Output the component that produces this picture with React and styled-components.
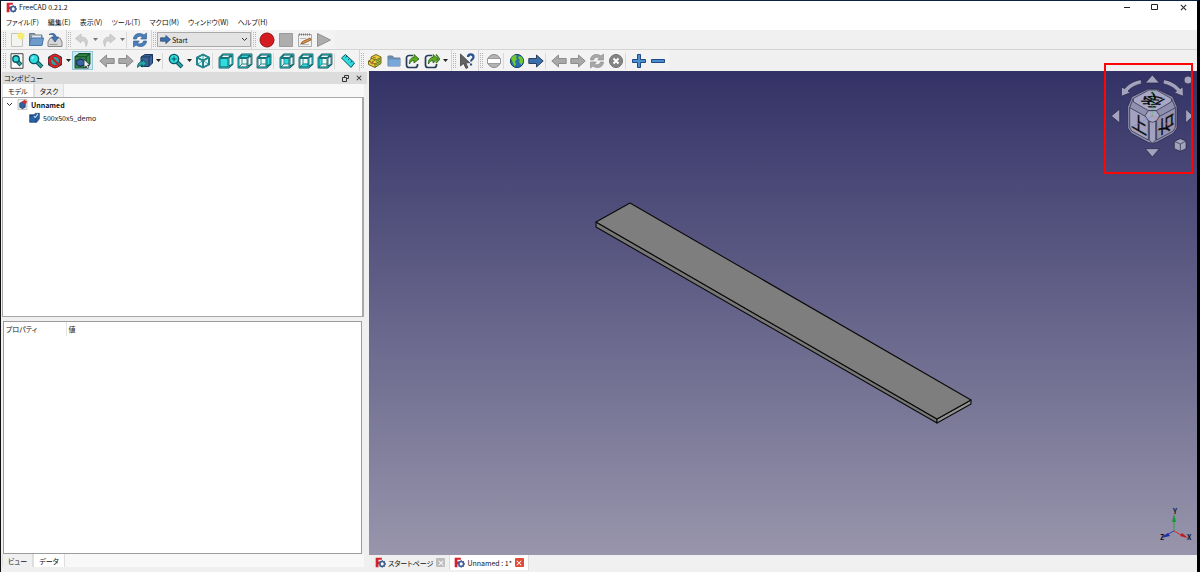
import React, { useState } from 'react'
import styled, { createGlobalStyle, css } from 'styled-components'

const FONT = '"Noto Sans CJK JP", "Noto Sans", sans-serif'
const LINE = '#d4d4d4'
const DARK = '#0a555c'
const TEAL = '#27a5a9'
const CYAN = '#2fdde0'
const NAVY = '#1d3557'

const GlobalStyle = createGlobalStyle`
  * { box-sizing: border-box; }
  body {
    margin: 0;
    background: #f0f0f0;
    font: 7px/12px ${FONT};
    font-feature-settings: "palt";
    color: #111;
  }
  button, select, th {
    font: inherit;
    font-feature-settings: inherit;
    color: inherit;
  }
  button {
    padding: 0;
    border: 0;
    background: none;
  }
  svg { display: block; flex: none; }
`

const Window = styled.div`
  min-height: 100vh;
  display: flex;
  flex-direction: column;
  border-top: 1px solid #0a2342;
  border-left: 1px solid #111;
  border-right: 3px solid #000;
`

const TitleBar = styled.header`
  display: flex;
  align-items: center;
  height: 12px;
  padding-left: 5px;
  background: #fff;
`

const Title = styled.h1`
  flex: 1;
  margin: 0 0 0 2px;
  font-size: 7px;
  font-weight: 400;
`

const WindowButton = styled.button`
  width: 28px;
  display: flex;
  justify-content: center;
`

const MenuBar = styled.nav`
  display: flex;
  align-items: center;
  gap: 9px;
  height: 17px;
  padding-left: 5px;
  background: #fff;
`

const MenuItem = styled.button`
  white-space: nowrap;
`

const ToolRow = styled.div`
  display: flex;
  height: ${props => props.$last ? 21 : 20}px;
  padding-left: 1px;
  background: #f0f0f0;
  border-bottom: ${props => props.$last ? 0 : 1}px solid ${LINE};
`

const ToolGroup = styled.div`
  display: flex;
  align-items: center;
  padding-right: ${props => props.$flush ? 0 : 2}px;
  border-right: 1px solid ${LINE};
  background: #f3f3f3;
  &:last-child {
    border-right: 0;
  }
`

const Grip = styled.span`
  width: 3px;
  height: 15px;
  margin: 0 1px;
  border: dotted #b4b4b4;
  border-width: 0 1px;
`

const Tool = styled.button`
  display: flex;
  align-items: center;
  justify-content: center;
  width: 19px;
  height: 19px;
  ${props => props.$active && css`
    width: 21px;
    border: 1px solid #90c8d8;
    background: #cfe8ef;
  `}
`

const CaretButton = styled.button`
  width: 8px;
  display: flex;
  justify-content: center;
`

const Separator = styled.span`
  width: 4px;
  height: 16px;
  border-left: 1px solid ${props => props.$blank ? 'transparent' : '#dadada'};
`

const Workbench = styled.label`
  display: flex;
  align-items: center;
  width: 94px;
  height: 15px;
  padding: 0 2px;
  border: 1px solid #a9a9a9;
  background: #e3e3e3;
  select {
    flex: 1;
    min-width: 0;
    padding: 0 1px;
    border: 0;
    appearance: none;
    background: none;
  }
`

const Body = styled.main`
  flex: 1;
  display: flex;
`

const SidePanel = styled.aside`
  flex: 0 0 368px;
  display: flex;
  flex-direction: column;
  padding: 1px 5px 5px 1px;
`

const PanelTitle = styled.div`
  display: flex;
  align-items: center;
  height: 12px;
  margin-right: -3px;
  padding: 0 2px;
  background: #dcdcdc;
  h2 {
    flex: 1;
    margin: 0;
    font-size: 7px;
    font-weight: 400;
  }
`

const PanelButton = styled.button`
  width: 13px;
  display: flex;
  justify-content: center;
`

const PanelTabs = styled.div`
  display: flex;
  height: 13px;
  background: #f8f8f8;
`

const PanelTab = styled.button`
  padding: 0 5px;
  border: 1px solid #dedede;
  border-width: 0 1px;
  background: ${props => props.$active ? '#fff' : '#f0f0f0'};
`

const TreeBox = styled.section`
  flex: 219 1 0;
  margin-bottom: 4px;
  border: 2px solid #a8a8a8;
  border-width: 1px 2px 1px 1px;
  background: #fff;
`

const Tree = styled.ul`
  margin: 0;
  padding: 0;
  list-style: none;
`

const TreeRow = styled.li`
  display: flex;
  align-items: center;
  gap: 3px;
  height: 13px;
  padding-left: ${props => props.$child ? 26 : 3}px;
  font-weight: ${props => props.$bold ? 700 : 400};
`

const Toggle = styled.button`
  padding-right: 1px;
`

const PropertyBox = styled.section`
  flex: 233 1 0;
  margin: 0 2px 0 1px;
  border: 1px solid #9c9c9c;
  background: #fff;
`

const PropertyTable = styled.table`
  width: 100%;
  border-collapse: collapse;
  table-layout: fixed;
  th {
    height: 14px;
    padding: 0 2px;
    text-align: left;
    font-weight: 400;
  }
  th:first-child {
    width: 62px;
    border-right: 1px solid #e4e4e4;
  }
`

const ViewArea = styled.section`
  flex: 1;
  min-width: 0;
  display: flex;
  flex-direction: column;
`

const Canvas = styled.div`
  position: relative;
  flex: 1;
  background: linear-gradient(#333267, #9895ac);
`

const Scene = styled.svg`
  position: absolute;
  width: 100%;
  height: 100%;
`

const NavigationCube = styled.svg`
  position: absolute;
  top: 0;
  right: 0;
`

const Highlight = styled.div`
  position: absolute;
  top: -8px;
  right: 4px;
  width: 89px;
  height: 111px;
  border: 2px solid #fc0505;
`

const AxisCross = styled.svg`
  position: absolute;
  right: 0;
  bottom: 8px;
`

const DocTabs = styled.div`
  display: flex;
  height: 17px;
  padding: 0 0 2px 2px;
`

const DocTab = styled.div`
  display: flex;
  align-items: center;
  gap: 2px;
  padding: 0 4px;
  border-right: 1px solid #dcdcdc;
  background: ${props => props.$active ? '#fff' : '#efefef'};
`

const CloseTab = styled.button`
  display: flex;
  align-items: center;
  justify-content: center;
  width: 9px;
  height: 9px;
  margin-left: 1px;
  border-radius: 1px;
  background: ${props => props.$active ? '#df4a32' : '#bdbdbd'};
`

/* icons */

const Icon = ({ size = 16, children }) => (
  <svg width={size} height={size} viewBox="0 0 16 16" fill="none" aria-hidden="true">{children}</svg>
)

const Logo = () => (
  <Icon size={11}>
    <path d="M1 1h9v3H5v3h4v3H5v5H1z" fill="#d6202c" />
    <circle cx="10.5" cy="10" r="3.4" stroke="#415f96" strokeWidth="2.4" fill="#fff" />
    <path d="M10.5 4.5v2M10.5 13.5v2M5 10h2M14 10h2M6.8 6.2l1.2 1.2M14.2 6.2L13 7.4M6.8 13.8L8 12.6M14.2 13.8L13 12.6" stroke="#415f96" strokeWidth="1.6" />
  </Icon>
)

const Caret = ({ muted }) => (
  <svg width="5" height="3" viewBox="0 0 5 3"><path d="M0 0h5L2.5 3z" fill={muted ? '#777' : '#222'} /></svg>
)

const Chevron = () => (
  <svg width="7" height="5" viewBox="0 0 7 5" fill="none"><path d="M1 1l2.5 2.5L6 1" stroke="#333" /></svg>
)

const Cross = ({ color = '#333', size = 7 }) => (
  <svg width={size} height={size} viewBox="0 0 8 8"><path d="M1 1l6 6M7 1L1 7" stroke={color} strokeWidth="1.4" /></svg>
)

const NewFile = () => (
  <Icon>
    <path d="M2.5 1.5h11v13h-11z" fill="#f3f3ef" stroke="#c4c4c0" />
    <circle cx="12" cy="4" r="3" fill="#f6e94c" />
    <path d="M12 0v8M8 4h8M9.5 1.5l5 5M14.5 1.5l-5 5" stroke="#f8ee7a" />
  </Icon>
)

const OpenFile = () => (
  <Icon>
    <path d="M1.5 13V1.5h5l1 1.500h6.500V13z" fill="#8d9aa8" stroke="#68788a" />
    <path d="M4 3.500h9v4H4z" fill="#e3e6ea" />
    <path d="M3 6h12.500l-1.500 7.500H1.300z" fill="#6f9bcb" stroke="#4877ae" />
  </Icon>
)

const SaveFile = () => (
  <Icon>
    <path d="M1 10l2-4h10l2 4v4.500H1z" fill="#d6d6d6" stroke="#858585" />
    <path d="M2.500 12.500h8" stroke="#999" />
    <path d="M2 2.500C6 .5 9 2 9 5h2.500L8 10 4.500 5H7C7 3 5 2 2 2.500z" fill="#3f76b5" stroke="#234f83" strokeWidth=".7" />
  </Icon>
)

const Undo = ({ flip }) => (
  <Icon>
    <g transform={flip ? 'matrix(-1 0 0 1 16 0)' : undefined}>
      <path d="M1.500 6.500L7 2v3c6 0 8 4 5 9.500C12 10.500 10.500 8.500 7 8.500V11z" fill="#cfcfcf" stroke="#bababa" strokeWidth=".7" />
    </g>
  </Icon>
)

const Refresh = ({ color = '#4a80bb', edge = '#2a5388' }) => (
  <Icon>
    <path d="M1.500 7C1.500 1.500 8 0 12 3l2.500-2v6H8.700l1.800-2.200C8 3.500 5 4.500 4.500 7z" fill={color} stroke={edge} strokeWidth=".6" />
    <path d="M14.500 9c0 5.500-6.500 7-10.500 4l-2.500 2V9h5.800l-1.800 2.200c2.500 1.300 5.500.3 6-2.200z" fill={color} stroke={edge} strokeWidth=".6" />
  </Icon>
)

const Arrow = ({ left, color = '#3a6fae', edge = NAVY, size = 16 }) => (
  <Icon size={size}>
    <path
      d={left ? 'M.8 8L7.500 2v3.500h7.700v5H7.500V14z' : 'M15.200 8L8.500 2v3.500H.8v5h7.700V14z'}
      fill={color} stroke={edge} strokeWidth=".9"
    />
  </Icon>
)

const Record = () => <Icon><circle cx="8" cy="8" r="7" fill="#d41b1f" stroke="#8f1015" /></Icon>
const Stop = () => <Icon><path d="M1.500 1.500h13v13h-13z" fill="#adadad" stroke="#9b9b9b" /></Icon>
const Play = () => <Icon><path d="M1.500 1.500l13 6.500-13 6.500z" fill="#acacac" stroke="#929292" /></Icon>

const EditMacro = () => (
  <Icon>
    <path d="M1.500 2.500h13v12h-13z" fill="#f2f1ed" stroke="#aaa" />
    <path d="M2 2.500h12" stroke="#777" strokeWidth="2" strokeDasharray="1 1" />
    <path d="M3 6.500h6M3 12.500h9" stroke="#bbb" />
    <path d="M4 11.500l1.500-2 7.500-3.500 1 2-7.500 3.500z" fill="#e3943d" stroke="#6d4324" strokeWidth=".7" />
  </Icon>
)

const Magnifier = ({ page, zoom }) => (
  <Icon>
    {page && <path d="M2 .7h12v14.600H2z" fill="#fafafa" stroke="#444" />}
    <path d={page ? 'M8.500 8.500l3.500 3.500' : 'M8 8l6 6'} stroke={DARK} strokeWidth="4" />
    <path d={page ? 'M8.500 8.500l3 3' : 'M8.500 8.500l5 5'} stroke={TEAL} strokeWidth="2.200" />
    <circle cx={page ? 7 : 6} cy="6" r={page ? 3.200 : 4.600} fill={CYAN} stroke={DARK} strokeWidth="1.400" />
    {zoom && <path d="M3.500 6h5M6 3.500v5" stroke={DARK} />}
    {!page && !zoom && <path d="M4 6c0-1.500 1-2 2-2" stroke="#c8ffff" />}
  </Icon>
)

const DrawStyle = () => (
  <Icon>
    <path d="M8 1l6.500 3v8L8 15l-6.500-3V4z" fill={TEAL} stroke={DARK} />
    <circle cx="8" cy="8" r="5.500" stroke="#8f171b" strokeWidth="3" />
    <circle cx="8" cy="8" r="5.500" stroke="#d2262a" strokeWidth="1.800" />
    <path d="M4.500 4.500l7 7" stroke="#c52125" strokeWidth="2.200" />
  </Icon>
)

const BoxSelection = () => (
  <Icon size={17}>
    <path d="M1 4.500L5 1.500h10V11l-3.500 4H1z" fill="#2f8a47" stroke="#164a2d" />
    <path d="M1 4.500h10.500V15M11.500 4.500L15 1.500" stroke="#164a2d" />
    <path d="M2.500 8l3.500-1.500L10 8v4l-4 1.500L2.500 12z" fill="#3b659f" stroke="#17315e" />
    <path d="M9.500 7v8l1.800-2 1.200 2.500 1.500-.7-1.200-2.500h2.200z" fill="#e6fbff" stroke="#222" strokeWidth=".6" />
  </Icon>
)

const LinkBox = () => (
  <Icon>
    <path d="M4 4l4-2.500h7.500V10L12 13.500H4z" fill="#3c6597" stroke="#1c375e" />
    <path d="M4 4h8v9.500M12 4l3.500-2.500" stroke="#1c375e" />
    <path d="M.5 14.500c0-4 2-6 5-6V6.500l4 4-4 3.500v-2c-2 0-3 .5-5 2.500z" fill={TEAL} stroke={DARK} strokeWidth=".8" />
  </Icon>
)

const IsoCube = () => (
  <Icon>
    <path d="M8 1.500l6 3v7L8 14.500l-6-3v-7z" fill="#e8fafa" />
    <path d="M8 1.500v6M2 11.500l6-4 6 4" stroke={TEAL} strokeWidth=".9" />
    <path d="M8 1.500l6 3v7L8 14.500l-6-3v-7zM2 4.500l6 3 6-3M8 7.500v7" stroke={DARK} strokeWidth="1.800" strokeLinejoin="round" />
    <path d="M8 1.500l6 3v7L8 14.500l-6-3v-7zM2 4.500l6 3 6-3M8 7.500v7" stroke={TEAL} strokeWidth=".9" />
  </Icon>
)

const FACES = {
  front: 'M1.500 5h9v9.500h-9z',
  top: 'M1.500 5L5 1.500h9.500L10.500 5z',
  right: 'M10.500 5l4-3.500V11l-4 3.500z',
  rear: 'M5 5h5.500v6H5z',
  bottom: 'M1.500 14.500L5 10.500h5.500v4z',
  left: 'M1.500 5L5 5v6l-3.500 3.500z',
}

const ViewCube = ({ face }) => (
  <Icon>
    <path d="M1.500 5L5 1.500h9.500V11l-4 3.500h-9z" fill="#f0f7f7" />
    <path d={FACES[face]} fill={CYAN} />
    {face !== 'front' && <path d="M5 5v6h5M1.500 14.500L5 11" stroke="#2b8b90" strokeWidth="1" />}
    <path d="M1.500 5L5 1.500h9.500V11l-4 3.500h-9zM1.500 5h9v9.500M10.500 5l4-3.500" stroke={DARK} strokeWidth="1.800" strokeLinejoin="round" />
    <path d="M1.500 5L5 1.500h9.500V11l-4 3.500h-9zM1.500 5h9v9.500M10.500 5l4-3.500" stroke={TEAL} strokeWidth=".8" />
  </Icon>
)

const Ruler = () => (
  <Icon>
    <path d="M1.500 5l4-3.500 9 8.500-3.500 4.500z" fill={CYAN} stroke={DARK} />
    <path d="M5.500 4.500L7 3M8 7l1.500-1.500M10.500 9.500L12 8" stroke={DARK} />
  </Icon>
)

const Part = () => (
  <Icon>
    <path d="M1.500 8L4 6.500V4l5-2.500L14 4v6.500l-6 4-6.500-3z" fill="#e7cf3c" stroke="#75651a" />
    <path d="M1.500 8L8 11l6-3.500M8 11v3.500M4 5l5 2 5-2.500M5 9l3-2" stroke="#75651a" />
    <path d="M9 8.500l4.500-2.500M9 12l4.500-2.500" stroke="#56a336" strokeWidth="1.400" />
    <path d="M3 9.500l3 1.500M6 4l3 1" stroke="#ce5940" />
  </Icon>
)

const Folder = () => (
  <Icon>
    <path d="M2 13V3h4.500L8 5h6v8z" fill="#6c8eb5" stroke="#657f9d" />
    <path d="M2.500 6.500H14V13H2.500z" fill="#78a8da" />
  </Icon>
)

const MakeLink = ({ twice }) => (
  <Icon>
    <path d="M8 2.500H4A2.500 2.500 0 001.500 5v7A2.500 2.500 0 004 14.500h6a2.500 2.500 0 002.500-2.500v-1" stroke="#263c59" strokeWidth="1.700" />
    <path d="M4.500 11C4 7 6 4.500 9 4.500V1.500l5 4.500-5 4V7.500c-2 0-3.500 1-4.500 3.500z" fill="#58ad21" stroke="#285c12" strokeWidth=".8" />
    {twice && <path d="M12 1.500L15.500 6 12 10" stroke="#397d18" strokeWidth="1.500" />}
  </Icon>
)

const WhatsThis = () => (
  <Icon>
    <path d="M1.500 1v12l3-2.500L7 15.500l2-1-2.200-4.700h4z" fill="#626262" stroke="#333" strokeWidth=".7" />
    <path d="M9 4c0-3.500 5.500-3.500 5.500 0 0 2.500-2.500 2-2.500 4.500M12 10.500v2" stroke="#29518c" strokeWidth="2.200" />
  </Icon>
)

const SetUrl = () => (
  <Icon>
    <circle cx="8" cy="8" r="6.500" fill="#b4b4b4" stroke="#8a8a8a" />
    <path d="M1.500 5.500h13v5h-13z" fill="#fff" stroke="#9b9b9b" />
  </Icon>
)

const Globe = () => (
  <Icon>
    <circle cx="8" cy="8" r="6.600" fill="#286eae" stroke="#173e69" />
    <path d="M2 5l3-3 3 .5-1 2L8 6l-2 2.500L7 11l-1.500 2.500L3.500 9zM10 3l3 1 1.500 4-2 4-2.500-3 1-2-2-2z" fill="#70c92d" />
  </Icon>
)

const StopLoad = () => (
  <Icon>
    <circle cx="8" cy="8" r="6.500" fill="#848484" stroke="#717171" />
    <path d="M5.500 5.500l5 5M10.500 5.500l-5 5" stroke="#fff" strokeWidth="2" />
  </Icon>
)

const Zoom = ({ plus }) => (
  <Icon>
    <path d={plus ? 'M6.500 1.500h3v5h5v3h-5v5h-3v-5h-5v-3h5z' : 'M1.500 6.500h13v3h-13z'} fill="#4b90cd" stroke="#204a87" />
  </Icon>
)

const DocIcon = () => (
  <Icon size={11}>
    <path d="M1.500.5h13v15h-13z" fill="#f4f4f4" stroke="#aaa" />
    <path d="M4 6l4-2 4 2v6l-4 2-4-2z" fill="#31609c" stroke="#173962" />
    <path d="M7 4l4-3 4 3-3 4z" fill="#d42f32" />
  </Icon>
)

const BodyIcon = () => (
  <Icon size={11}>
    <path d="M1 4h6l2-2h6v8l-4 5H1z" fill="#2861a5" stroke="#17375f" />
    <path d="M1 6h9v9M10 6l5-4" stroke="#173d6b" />
    <path d="M7 6l2 2 4-5" stroke="#d7eaff" strokeWidth="1.500" />
  </Icon>
)

const GREY = { color: '#a8a8a8', edge: '#858585' }

const FILE_TOOLS = [
  [['新規', <NewFile />], ['開く', <OpenFile />], ['保存', <SaveFile />]],
  [['元に戻す', <Undo />], 'muted', ['やり直す', <Undo flip />], 'muted', 'sep', ['更新', <Refresh />]],
]

const MACRO_TOOLS = [
  [['マクロの記録', <Record />], ['記録の停止', <Stop />], ['マクロの編集', <EditMacro />], ['マクロの実行', <Play />]],
]

const VIEW_TOOLS = [
  [
    ['全てにフィット', <Magnifier page />], ['選択にフィット', <Magnifier />], ['描画スタイル', <DrawStyle />], 'caret',
    ['ボックス選択', <BoxSelection />, true], 'blank',
    ['戻る', <Arrow left {...GREY} />], ['進む', <Arrow {...GREY} />], ['リンク先へ', <LinkBox />], 'caret', 'sep',
    ['ズーム', <Magnifier zoom />], 'caret', ['等角投影', <IsoCube />], 'sep',
    ['正面', <ViewCube face="front" />], ['上面', <ViewCube face="top" />], ['右面', <ViewCube face="right" />], 'sep',
    ['背面', <ViewCube face="rear" />], ['底面', <ViewCube face="bottom" />], ['左面', <ViewCube face="left" />], 'sep',
    ['距離の計測', <Ruler />],
  ],
  [['パート', <Part />], ['グループ', <Folder />], ['リンク', <MakeLink />], ['リンクの操作', <MakeLink twice />], 'caret'],
  [['ヘルプ', <WhatsThis />]],
  [
    ['URL', <SetUrl />], 'sep', ['ウェブサイト', <Globe />], ['移動', <Arrow />], 'sep',
    ['前のページ', <Arrow left {...GREY} />], ['次のページ', <Arrow {...GREY} />],
    ['再読み込み', <Refresh {...GREY} />], ['中止', <StopLoad />], 'sep',
    ['拡大', <Zoom plus />], ['縮小', <Zoom />],
  ],
]

const MENUS = ['ファイル(F)', '編集(E)', '表示(V)', 'ツール(T)', 'マクロ(M)', 'ウィンドウ(W)', 'ヘルプ(H)']

function Tools({ groups }) {
  return groups.map((group, i) => (
    <ToolGroup key={i}>
      <Grip />
      {group.map((item, index) => {
        if (item === 'caret' || item === 'muted') {
          return <CaretButton key={index} aria-label="メニュー"><Caret muted={item === 'muted'} /></CaretButton>
        }
        if (item === 'sep' || item === 'blank') return <Separator key={index} $blank={item === 'blank'} />
        const [label, icon, active] = item
        return <Tool key={index} aria-label={label} $active={active}>{icon}</Tool>
      })}
    </ToolGroup>
  ))
}

function Model() {
  return (
    <Scene viewBox="0 0 828 484" aria-label="500x50x5_demo">
      <g stroke="#0a0a0a" strokeWidth="1.100" strokeLinejoin="round">
        <path d="M227 151l341 197v4L227 156z" fill="#777" />
        <path d="M568 348l34-19v4l-34 19z" fill="#929292" />
        <path d="M261 132l341 197-34 19L227 151z" fill="#7e7e7e" />
      </g>
    </Scene>
  )
}

function NaviCube() {
  return (
    <NavigationCube width="93" height="101" viewBox="27 48 279 303" aria-label="ナビゲーションキューブ">
      <g fill="#a3a3c0" stroke="#22223a" strokeWidth="2" strokeLinejoin="round">
        <path d="M172 60l21 24h-42zM172 306l21-25h-42zM49 183l25-21v42zM294 183l-22-21v42z" />
        <path d="M138 74c-20 3-38 13-49 27l-9-5-1 28 27-11-7-5c10-11 23-18 41-22z" />
        <path d="M206 74c20 3 38 13 49 27l9-5 1 28-27-11 7-5c-10-11-23-18-41-22z" />
        <circle cx="279" cy="75" r="12" />
        <path d="M238 259l18-8 17 7v23l-17 8-18-8z" />
        <path d="M238 259l18 8 17-9M256 267v22" fill="none" />
      </g>
      <g fill="#9797b8" stroke="#22223a" strokeWidth="2" strokeLinejoin="round">
        <path d="M159 102h26l48 23 13 30v64l-11 16-48 26-15 5-15-5-48-26-11-16v-64l13-30z" fill="#8f8fb0" />
        <path d="M162 105h22l46 26-2 10-44 26h-24l-44-26-2-10z" fill="#a8a8c6" />
        <path d="M104 158l56 31v66l-50-27-6-12z" fill="#a2a2c0" />
        <path d="M241 158l-56 31v66l50-27 6-12z" fill="#9494b5" />
        <path d="M163 199l9-6 10 6v57l-10 8-9-8z" fill="#a2a2c0" />
        <path d="M160 167h24l10 15-9 15-13 5-12-5-10-15z" fill="#aaaac7" />
        <path d="M114 132l-10 26M230 132l11 26" />
      </g>
      <g fontFamily={FONT} fontSize="56" textAnchor="middle" fill="#080808" stroke="#080808" strokeWidth="1">
        <text transform="matrix(-.866 -.5 .866 -.5 172 136)" y="20">後</text>
        <text transform="matrix(.866 .5 0 1 132 208)" y="20">上</text>
        <text transform="matrix(0 -1 .866 -.5 213 208)" y="20">右</text>
      </g>
      <g strokeWidth="2" strokeDasharray="5 4" fill="none">
        <path d="M172 183v-80" stroke="#42bd67" />
        <path d="M172 183l70 38" stroke="#f0703f" />
        <path d="M172 183l-66 36" stroke="#5c80ee" />
      </g>
    </NavigationCube>
  )
}

function Axes() {
  return (
    <AxisCross width="42" height="42" viewBox="0 0 42 42" aria-label="座標軸">
      <path d="M19 26V14" stroke="#2fa144" />
      <path d="M19 26l11 6" stroke="#cc3034" />
      <path d="M19 26L9 31" stroke="#283fb6" />
      <path d="M19 9l2 8h-4z" fill="#159936" />
      <path d="M33 33l-8-2 2-3z" fill="#bd1c22" />
      <path d="M6 33l7-5 2 3z" fill="#1d2ea1" />
      <g fontFamily={FONT} fontSize="7" fontWeight="700" fill="#161626">
        <text x="18" y="9">Y</text>
        <text x="32" y="35">X</text>
        <text x="5" y="35">Z</text>
      </g>
    </AxisCross>
  )
}

export default function App() {
  const [workbench, setWorkbench] = useState('Start')

  return (
    <>
      <GlobalStyle />
      <Window>
        <TitleBar>
          <Logo />
          <Title>FreeCAD 0.21.2</Title>
          <WindowButton aria-label="最小化">
            <svg width="8" height="8" viewBox="0 0 8 8"><path d="M1 4.500h6" stroke="#222" /></svg>
          </WindowButton>
          <WindowButton aria-label="最大化">
            <svg width="8" height="8" viewBox="0 0 8 8" fill="none"><path d="M.5 1.500h6v5h-6z" stroke="#222" /></svg>
          </WindowButton>
          <WindowButton aria-label="閉じる"><Cross /></WindowButton>
        </TitleBar>

        <MenuBar>
          {MENUS.map(item => <MenuItem key={item}>{item}</MenuItem>)}
        </MenuBar>

        <ToolRow>
          <Tools groups={FILE_TOOLS} />
          <ToolGroup $flush>
            <Grip />
            <Workbench>
              <Arrow size={11} />
              <select aria-label="ワークベンチ" value={workbench} onChange={e => setWorkbench(e.target.value)}>
                <option>Start</option>
                <option>Part</option>
              </select>
              <Chevron />
            </Workbench>
          </ToolGroup>
          <Tools groups={MACRO_TOOLS} />
        </ToolRow>
        <ToolRow $last>
          <Tools groups={VIEW_TOOLS} />
        </ToolRow>

        <Body>
          <SidePanel>
            <PanelTitle>
              <h2>コンボビュー</h2>
              <PanelButton aria-label="フロート">
                <svg width="7" height="7" viewBox="0 0 7 7" fill="none">
                  <path d="M2.500 2V.5h4v3H5M.5 2.500h4v4h-4z" stroke="#333" />
                </svg>
              </PanelButton>
              <PanelButton aria-label="閉じる"><Cross size={6} /></PanelButton>
            </PanelTitle>
            <PanelTabs role="tablist">
              <PanelTab role="tab" aria-selected="true" $active>モデル</PanelTab>
              <PanelTab role="tab" aria-selected="false">タスク</PanelTab>
            </PanelTabs>
            <TreeBox>
              <Tree>
                <TreeRow $bold>
                  <Toggle aria-label="折りたたむ"><Chevron /></Toggle>
                  <DocIcon />
                  Unnamed
                </TreeRow>
                <TreeRow $child>
                  <BodyIcon />
                  500x50x5_demo
                </TreeRow>
              </Tree>
            </TreeBox>
            <PropertyBox>
              <PropertyTable>
                <thead>
                  <tr>
                    <th>プロパティ</th>
                    <th>値</th>
                  </tr>
                </thead>
              </PropertyTable>
            </PropertyBox>
            <PanelTabs role="tablist">
              <PanelTab role="tab" aria-selected="false">ビュー</PanelTab>
              <PanelTab role="tab" aria-selected="true" $active>データ</PanelTab>
            </PanelTabs>
          </SidePanel>

          <ViewArea>
            <Canvas>
              <Model />
              <NaviCube />
              <Axes />
              <Highlight />
            </Canvas>
            <DocTabs>
              <DocTab>
                <Logo />
                スタートページ
                <CloseTab aria-label="閉じる"><Cross color="#fff" size={6} /></CloseTab>
              </DocTab>
              <DocTab $active>
                <Logo />
                Unnamed : 1*
                <CloseTab aria-label="閉じる" $active><Cross color="#fff" size={6} /></CloseTab>
              </DocTab>
            </DocTabs>
          </ViewArea>
        </Body>
      </Window>
    </>
  )
}
